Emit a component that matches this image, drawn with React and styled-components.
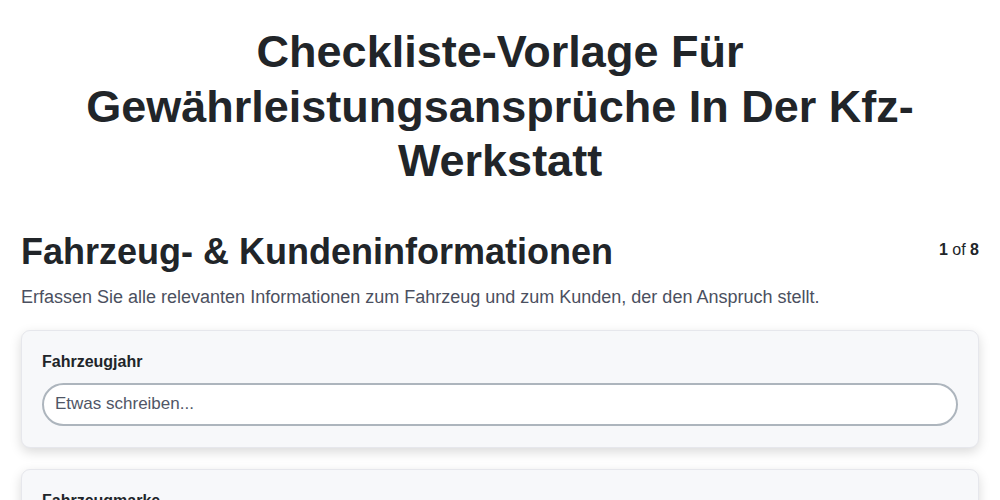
import React from "react";
import styled, { createGlobalStyle } from "styled-components";

const Global = createGlobalStyle`
  html, body { margin: 0; padding: 0; background: #ffffff; }
  body { font-family: "Liberation Sans", Arial, sans-serif; color: #212529; }
  * { box-sizing: border-box; }
`;

const Page = styled.div`
  padding: 0 21px;
`;

const Title = styled.h1`
  margin: 25px 0 0;
  text-align: center;
  font-size: 45px;
  line-height: 54.5px;
  font-weight: 700;
  color: #212529;
  padding: 0 60px;
`;

const SectionHead = styled.div`
  display: flex;
  justify-content: space-between;
  align-items: flex-start;
  margin-top: 41px;
`;

const SectionTitle = styled.h2`
  margin: 0;
  font-size: 36px;
  line-height: 44px;
  font-weight: 700;
  color: #212529;
`;

const Counter = styled.div`
  font-size: 16px;
  line-height: 20px;
  padding-top: 10px;
  color: #212529;
  b { font-weight: 700; }
`;

const Description = styled.p`
  margin: 11px 0 0;
  font-size: 18px;
  line-height: 24px;
  color: #4b5060;
`;

const Cards = styled.div`
  display: flex;
  flex-direction: column;
  gap: 21px;
  margin-top: 21px;
`;

const Card = styled.div`
  background: #f7f8fa;
  border: 1px solid #e6e7ec;
  border-radius: 9px;
  padding: 21px 20px 21px;
  box-shadow: 0 4px 12px rgba(0, 0, 0, 0.15);
`;

const Label = styled.label`
  display: block;
  font-size: 16px;
  line-height: 20px;
  font-weight: 700;
  color: #212529;
  margin-bottom: 11px;
`;

const Input = styled.input`
  display: block;
  width: 100%;
  height: 43px;
  border: 2px solid #adb5bd;
  border-radius: 22px;
  background: #ffffff;
  padding: 0 11px;
  font-family: "Liberation Sans", Arial, sans-serif;
  font-size: 17px;
  color: #212529;
  outline: none;
  &::placeholder { color: #505666; }
`;

const fields = ["Fahrzeugjahr", "Fahrzeugmarke", "Fahrzeugmodell"];

export default function App() {
  return (
    <>
      <Global />
      <Page>
        <Title>Checkliste-Vorlage Für Gewährleistungsansprüche In Der Kfz-Werkstatt</Title>
        <SectionHead>
          <SectionTitle>Fahrzeug- &amp; Kundeninformationen</SectionTitle>
          <Counter><b>1</b> of <b>8</b></Counter>
        </SectionHead>
        <Description>
          Erfassen Sie alle relevanten Informationen zum Fahrzeug und zum Kunden, der den Anspruch stellt.
        </Description>
        <Cards>
          {fields.map((f) => (
            <Card key={f}>
              <Label>{f}</Label>
              <Input placeholder="Etwas schreiben..." />
            </Card>
          ))}
        </Cards>
      </Page>
    </>
  );
}
